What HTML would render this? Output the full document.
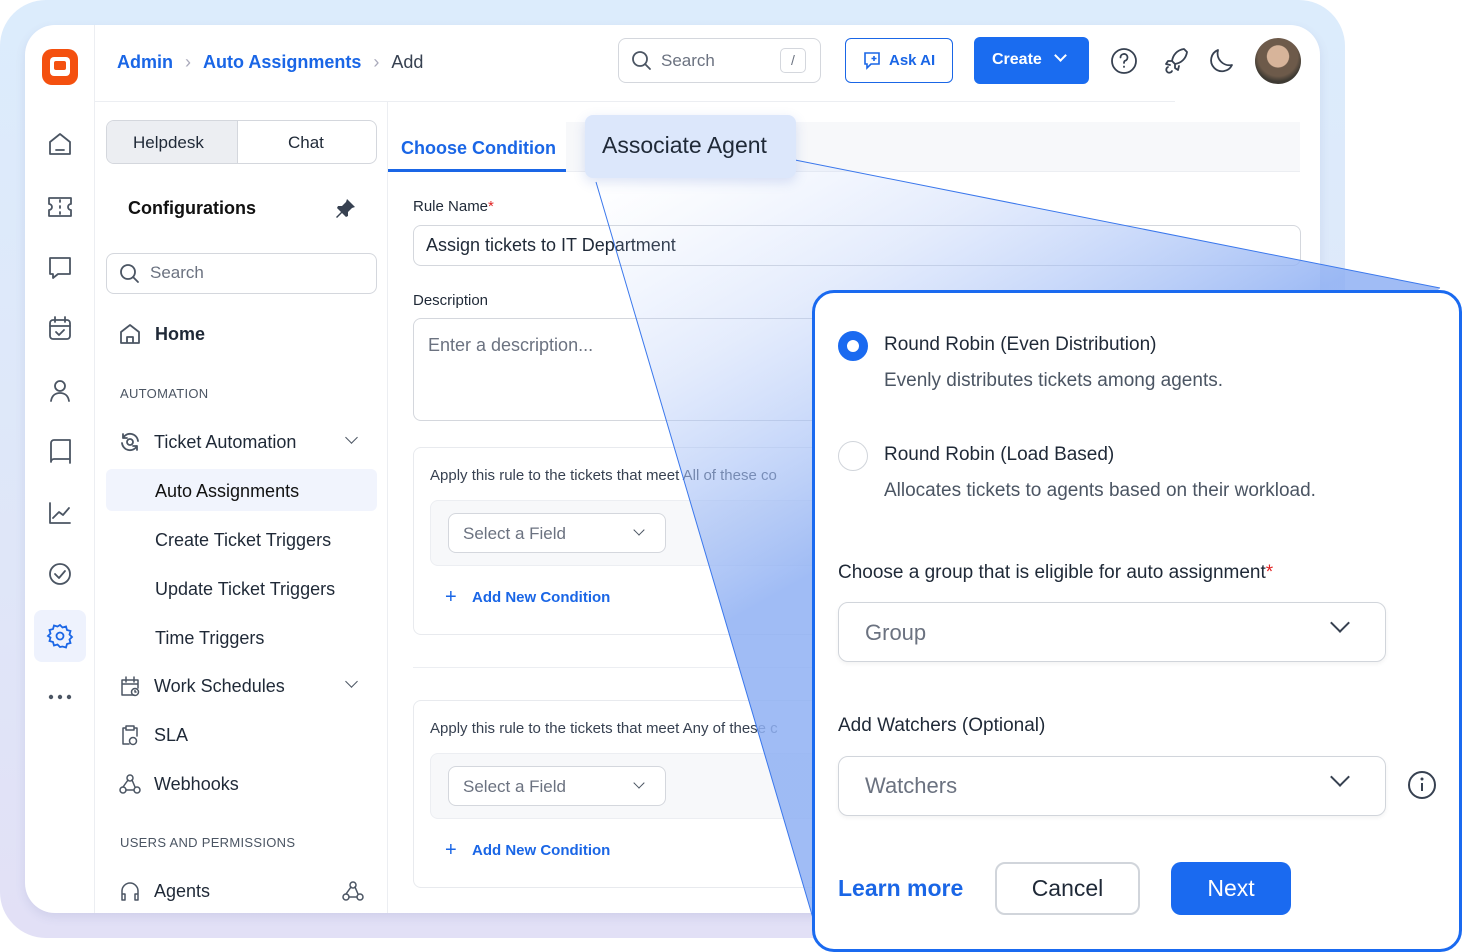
<!DOCTYPE html>
<html><head><meta charset="utf-8"><style>
*{box-sizing:border-box;margin:0;padding:0}
body{width:1462px;height:952px;overflow:hidden;background:#fff;font-family:"Liberation Sans",sans-serif;color:#1f2937;position:relative}
.a{position:absolute}
.frame{left:0;top:0;width:1345px;height:938px;border-radius:46px;background:linear-gradient(180deg,#dcecfc 0%,#dfe6f8 60%,#e2e0f6 100%)}
.card{left:25px;top:25px;width:1295px;height:888px;border-radius:30px;background:#fff;overflow:hidden;box-shadow:0 4px 10px rgba(80,90,160,.12)}
.ic{stroke:#4b5563;fill:none;stroke-width:1.8;stroke-linecap:round;stroke-linejoin:round}
.t{font-size:18px;color:#1f2937;white-space:nowrap}
.blue{color:#1a66e6}
.box{border:1px solid #d4d7dd;border-radius:8px;background:#fff}
</style></head><body>
<div class="a frame"></div>
<div class="a card">
  <div class="a" style="left:69px;top:0;width:1px;height:888px;background:#eceef2"></div>
  <div class="a" style="left:70px;top:76px;width:1080px;height:1px;background:#eceef2"></div>
  <div class="a" style="left:362px;top:77px;width:1px;height:811px;background:#eceef2"></div>
  <div class="a" style="left:17px;top:24px;width:36px;height:36px;border-radius:10px;background:#f4500f"></div>
  <div class="a" style="left:25px;top:32px;width:20px;height:19px;border-radius:4px;background:#fff"></div>
  <div class="a" style="left:29px;top:36px;width:12px;height:9px;border-radius:2px;background:#f4500f"></div>
</div>
<svg class="a" style="left:0;top:0" width="1462" height="952">
  <g class="ic">
    <path d="M50 142l10-8 10 8v12H50z M56 150h8"/>
    <path d="M49 198h22v6a3 3 0 0 0 0 6v6H49v-6a3 3 0 0 0 0-6z M60 200v2M60 206v2M60 212v2"/>
    <path d="M50 258h20v16h-12l-5 4v-4h-3z"/>
    <rect x="50" y="320" width="20" height="19" rx="3"/><path d="M50 326h20M55 317v5M65 317v5M56 332l3 3 5-5"/>
    <circle cx="60" cy="386" r="5"/><path d="M51 401c1-6 5-8 9-8s8 2 9 8"/>
    <path d="M51 443a3 3 0 0 1 3-3h16v19H54a3 3 0 0 0-3 3zM51 462a3 3 0 0 1 3-3h16v4"/>
    <path d="M50 503v20h20M53 518l6-6 4 3 6-7"/>
    <circle cx="60" cy="574" r="10"/><path d="M55 574l4 4 6-7"/>
  </g>
  <rect x="34" y="610" width="52" height="52" rx="8" fill="#eef2fd"/>
  <g fill="none" stroke="#1a66e6" stroke-width="1.8"><circle cx="60" cy="636" r="3.5"/><path d="M60 625l2.5 2.5 3.5-1 1 3.5 3.5 1-1 3.5 2.5 2.5-2.5 2.5 1 3.5-3.5 1-1 3.5-3.5-1L60 647l-2.5-2.5-3.5 1-1-3.5-3.5-1 1-3.5L48 636l2.5-2.5-1-3.5 3.5-1 1-3.5 3.5 1z"/></g>
  <g fill="#4b5563"><circle cx="51" cy="697" r="2.2"/><circle cx="60" cy="697" r="2.2"/><circle cx="69" cy="697" r="2.2"/></g>
</svg>
<div class="a t" style="left:117px;top:52px;font-size:18px"><span class="blue" style="font-weight:600">Admin</span><span style="color:#aab;margin:0 12px">›</span><span class="blue" style="font-weight:600">Auto Assignments</span><span style="color:#aab;margin:0 12px">›</span><span style="color:#374151">Add</span></div>
<div class="a box" style="left:618px;top:38px;width:203px;height:45px"></div>
<svg class="a" style="left:631px;top:50px" width="22" height="22"><g class="ic"><circle cx="9" cy="9" r="7"/><path d="M14 14l5 5"/></g></svg>
<div class="a t" style="left:661px;top:51px;color:#6b7280;font-size:17px">Search</div>
<div class="a" style="left:780px;top:48px;width:26px;height:25px;border:1px solid #d4d7dd;border-radius:5px;text-align:center;line-height:23px;color:#6b7280;font-size:14px">/</div>
<div class="a" style="left:845px;top:38px;width:108px;height:45px;border:1px solid #1a66e6;border-radius:6px"></div>
<svg class="a" style="left:862px;top:50px" width="22" height="22"><g fill="none" stroke="#1a66e6" stroke-width="1.6"><path d="M3 3h14v11H9l-4 4v-4H3z"/><path d="M12 6v5M9.5 8.5h5"/></g></svg>
<div class="a t blue" style="left:889px;top:52px;font-size:15px;font-weight:600">Ask AI</div>
<div class="a" style="left:974px;top:37px;width:115px;height:47px;border-radius:6px;background:#1a6cf0;color:#fff;font-size:16px;font-weight:600;line-height:46px;padding-left:18px">Create <span style="display:inline-block;width:9px;height:9px;border-right:2px solid #fff;border-bottom:2px solid #fff;transform:rotate(45deg);margin:0 0 4px 10px"></span></div>
<svg class="a" style="left:1108px;top:45px" width="140" height="32"><g class="ic" style="stroke:#374151"><circle cx="16" cy="16" r="12"/><path d="M12.5 12.5a3.5 3.5 0 1 1 4.5 3.3c-1 .4-1 1.2-1 2.2M16 21.5v.5"/>
<path d="M76 4c-7 1-11 6-12 12l3 3c6-1 11-5 12-12zM64 16l-4 0-2 3 4 1M67 19l0 4 3 2 1-4M60 22a3 3 0 1 0 4 4"/>
<path d="M110 5a11 11 0 1 0 14 15A12 12 0 0 1 110 5z"/></g></svg>
<div class="a" style="left:1255px;top:38px;width:46px;height:46px;border-radius:50%;background:radial-gradient(circle at 50% 40%,#d7b49a 0 30%,#6d5a4a 32% 55%,#3e3a33 70%);"></div>
<div class="a" style="left:106px;top:120px;width:271px;height:44px;border:1px solid #d4d7dd;border-radius:8px;overflow:hidden"><div style="width:131px;height:100%;background:#eceef2;border-right:1px solid #d4d7dd"></div></div>
<div class="a t" style="left:133px;top:133px;font-size:17px">Helpdesk</div>
<div class="a t" style="left:288px;top:133px;font-size:17px">Chat</div>
<div class="a t" style="left:128px;top:198px;font-weight:700;font-size:18px;color:#111">Configurations</div>
<svg class="a" style="left:332px;top:196px" width="26" height="26"><path d="M15 3l8 8-3 1-4 4 0 4-2 1-4-4-5 5-1-1 5-5-4-4 1-2 4 0 4-4z" fill="#374151"/></svg>
<div class="a box" style="left:106px;top:253px;width:271px;height:41px"></div>
<svg class="a" style="left:119px;top:263px" width="22" height="22"><g class="ic"><circle cx="9" cy="9" r="7"/><path d="M14 14l5 5"/></g></svg>
<div class="a t" style="left:150px;top:263px;color:#6b7280;font-size:17px">Search</div>
<svg class="a" style="left:118px;top:322px" width="24" height="24"><g class="ic"><path d="M3 10l9-7 9 7v11H3z M9 21v-6h6v6"/></g></svg>
<div class="a t" style="left:155px;top:324px;font-weight:600">Home</div>
<div class="a" style="left:120px;top:386px;font-size:13px;color:#4b5563;letter-spacing:.3px">AUTOMATION</div>
<svg class="a" style="left:118px;top:430px" width="24" height="24"><g class="ic"><path d="M20 11a8 8 0 0 0-15-3M4 13a8 8 0 0 0 15 3M5 4v4h4M19 20v-4h-4"/><circle cx="12" cy="12" r="3"/></g></svg>
<div class="a t" style="left:154px;top:432px">Ticket Automation</div>
<div class="a" style="left:347px;top:433px;width:9px;height:9px;border-right:1.8px solid #4b5563;border-bottom:1.8px solid #4b5563;transform:rotate(45deg)"></div>
<div class="a" style="left:106px;top:469px;width:271px;height:42px;background:#f1f4fd;border-radius:6px"></div>
<div class="a t" style="left:155px;top:481px;color:#111">Auto Assignments</div>
<div class="a t" style="left:155px;top:530px">Create Ticket Triggers</div>
<div class="a t" style="left:155px;top:579px">Update Ticket Triggers</div>
<div class="a t" style="left:155px;top:628px">Time Triggers</div>
<svg class="a" style="left:118px;top:674px" width="24" height="24"><g class="ic" style="stroke-width:1.5"><path d="M16 21H4V6h16v8M4 10h16M8 3v5M16 3v5"/><circle cx="17" cy="18" r="3.5"/><path d="M17 16.5v1.5h1"/></g></svg>
<div class="a t" style="left:154px;top:676px">Work Schedules</div>
<div class="a" style="left:347px;top:677px;width:9px;height:9px;border-right:1.8px solid #4b5563;border-bottom:1.8px solid #4b5563;transform:rotate(45deg)"></div>
<svg class="a" style="left:118px;top:723px" width="24" height="24"><g class="ic" style="stroke-width:1.5"><path d="M11 21H5V5h3M16 5h3v8M8 3h8v4H8z"/><circle cx="15" cy="18" r="3.5"/></g></svg>
<div class="a t" style="left:154px;top:725px">SLA</div>
<svg class="a" style="left:118px;top:772px" width="24" height="24"><g class="ic" style="stroke-width:1.5"><circle cx="12" cy="6" r="3"/><circle cx="5" cy="18" r="3"/><circle cx="19" cy="18" r="3"/><path d="M10 8l-5 7M8 18h8M14 8l3 7"/></g></svg>
<div class="a t" style="left:154px;top:774px">Webhooks</div>
<div class="a" style="left:120px;top:835px;font-size:13px;color:#4b5563;letter-spacing:.3px">USERS AND PERMISSIONS</div>
<svg class="a" style="left:118px;top:879px" width="24" height="24"><g class="ic" style="stroke-width:1.5"><path d="M4 17v-5a8 8 0 0 1 16 0v5M4 15h3v6H4zM17 15h3v6h-3z"/></g></svg>
<div class="a t" style="left:154px;top:881px">Agents</div>
<svg class="a" style="left:341px;top:879px" width="24" height="24"><g class="ic" style="stroke-width:1.5"><circle cx="12" cy="6" r="3"/><circle cx="5" cy="18" r="3"/><circle cx="19" cy="18" r="3"/><path d="M10 8l-5 7M8 18h8M14 8l3 7"/></g></svg>
<div class="a" style="left:388px;top:122px;width:912px;height:50px;background:#f7f8fa;border-bottom:1px solid #eceef2"></div>
<div class="a" style="left:388px;top:122px;width:178px;height:50px;background:#fff;border-bottom:3px solid #1a66e6"></div>
<div class="a t blue" style="left:401px;top:138px;font-size:18px;font-weight:600">Choose Condition</div>
<div class="a" style="left:413px;top:198px;font-size:15px;color:#1f2937">Rule Name<span style="color:#e02424">*</span></div>
<div class="a box" style="left:413px;top:225px;width:888px;height:41px"></div>
<div class="a t" style="left:426px;top:235px">Assign tickets to IT Department</div>
<div class="a" style="left:413px;top:292px;font-size:15px;color:#1f2937">Description</div>
<div class="a box" style="left:413px;top:318px;width:420px;height:103px"></div>
<div class="a t" style="left:428px;top:335px;color:#6b7280">Enter a description...</div>
<div class="a box" style="left:413px;top:447px;width:420px;height:188px;border-color:#e8eaee"></div>
<div class="a" style="left:430px;top:467px;font-size:15px;color:#374151;white-space:nowrap">Apply this rule to the tickets that meet All of these co</div>
<div class="a" style="left:430px;top:500px;width:400px;height:66px;background:#f7f8fa;border:1px solid #eceef2;border-radius:8px"></div>
<div class="a box" style="left:448px;top:513px;width:218px;height:40px"></div>
<div class="a t" style="left:463px;top:524px;color:#6b7280;font-size:17px">Select a Field</div>
<div class="a" style="left:635px;top:526px;width:8px;height:8px;border-right:1.6px solid #4b5563;border-bottom:1.6px solid #4b5563;transform:rotate(45deg)"></div>
<div class="a blue" style="left:445px;top:586px;font-size:20px">+</div>
<div class="a blue" style="left:472px;top:589px;font-size:15px;font-weight:600">Add New Condition</div>
<div class="a" style="left:413px;top:667px;width:420px;height:1px;background:#eceef2"></div>
<div class="a box" style="left:413px;top:700px;width:420px;height:188px;border-color:#e8eaee"></div>
<div class="a" style="left:430px;top:720px;font-size:15px;color:#374151;white-space:nowrap">Apply this rule to the tickets that meet Any of these c</div>
<div class="a" style="left:430px;top:753px;width:400px;height:66px;background:#f7f8fa;border:1px solid #eceef2;border-radius:8px"></div>
<div class="a box" style="left:448px;top:766px;width:218px;height:40px"></div>
<div class="a t" style="left:463px;top:777px;color:#6b7280;font-size:17px">Select a Field</div>
<div class="a" style="left:635px;top:779px;width:8px;height:8px;border-right:1.6px solid #4b5563;border-bottom:1.6px solid #4b5563;transform:rotate(45deg)"></div>
<div class="a blue" style="left:445px;top:839px;font-size:20px">+</div>
<div class="a blue" style="left:472px;top:842px;font-size:15px;font-weight:600">Add New Condition</div>
<svg class="a" style="left:0;top:0" width="1462" height="952">
  <defs><linearGradient id="g" x1="620" y1="170" x2="840" y2="560" gradientUnits="userSpaceOnUse"><stop offset="0" stop-color="#c7d8fa" stop-opacity="0"/><stop offset=".45" stop-color="#b3c9f8" stop-opacity=".35"/><stop offset="1" stop-color="#8fb0f3" stop-opacity=".85"/></linearGradient></defs>
  <polygon points="596,182 795,160 1440,288 815,925" fill="url(#g)"/>
  <path d="M596 182L815 925M795 160L1440 288" stroke="#3b78ec" stroke-width="1" fill="none"/>
</svg>
<div class="a" style="left:585px;top:115px;width:211px;height:63px;border-radius:8px;background:#dce7fb;box-shadow:0 4px 12px rgba(60,100,200,.18)"></div>
<div class="a t" style="left:602px;top:132px;font-size:23px;color:#1f2937">Associate Agent</div>
<div class="a" style="left:812px;top:290px;width:650px;height:662px;border:3px solid #1a6af0;border-radius:22px;background:#fff"></div>
<div class="a" style="left:838px;top:331px;width:30px;height:30px;border-radius:50%;border:9px solid #1a6af0;background:#fff"></div>
<div class="a t" style="left:884px;top:334px;font-size:19px">Round Robin (Even Distribution)</div>
<div class="a t" style="left:884px;top:370px;font-size:19px;color:#4b5563">Evenly distributes tickets among agents.</div>
<div class="a" style="left:838px;top:441px;width:30px;height:30px;border-radius:50%;border:1.5px solid #d1d5db"></div>
<div class="a t" style="left:884px;top:444px;font-size:19px">Round Robin (Load Based)</div>
<div class="a t" style="left:884px;top:480px;font-size:19px;color:#4b5563">Allocates tickets to agents based on their workload.</div>
<div class="a t" style="left:838px;top:562px;font-size:19px">Choose a group that is eligible for auto assignment<span style="color:#e02424">*</span></div>
<div class="a" style="left:838px;top:602px;width:548px;height:60px;border:1.5px solid #d1d5db;border-radius:10px;box-shadow:0 2px 4px rgba(0,0,0,.05)"></div>
<div class="a t" style="left:865px;top:620px;font-size:22px;color:#6b7280">Group</div>
<div class="a" style="left:1333px;top:616px;width:14px;height:14px;border-right:2.4px solid #374151;border-bottom:2.4px solid #374151;transform:rotate(45deg)"></div>
<div class="a t" style="left:838px;top:715px;font-size:19px">Add Watchers (Optional)</div>
<div class="a" style="left:838px;top:756px;width:548px;height:60px;border:1.5px solid #d1d5db;border-radius:10px;box-shadow:0 2px 4px rgba(0,0,0,.05)"></div>
<div class="a t" style="left:865px;top:773px;font-size:22px;color:#6b7280">Watchers</div>
<div class="a" style="left:1333px;top:770px;width:14px;height:14px;border-right:2.4px solid #374151;border-bottom:2.4px solid #374151;transform:rotate(45deg)"></div>
<svg class="a" style="left:1406px;top:769px" width="32" height="32"><g fill="none" stroke="#374151" stroke-width="2"><circle cx="16" cy="16" r="13"/><path d="M16 14v8"/></g><circle cx="16" cy="10" r="1.5" fill="#374151"/></svg>
<div class="a t blue" style="left:838px;top:875px;font-size:23px;font-weight:600">Learn more</div>
<div class="a" style="left:995px;top:862px;width:145px;height:53px;border:2px solid #d1d5db;border-radius:10px;text-align:center;line-height:49px;font-size:23px;color:#1f2937">Cancel</div>
<div class="a" style="left:1171px;top:862px;width:120px;height:53px;background:#1a6af0;border-radius:10px;text-align:center;line-height:53px;font-size:23px;color:#fff">Next</div>
</body></html>
